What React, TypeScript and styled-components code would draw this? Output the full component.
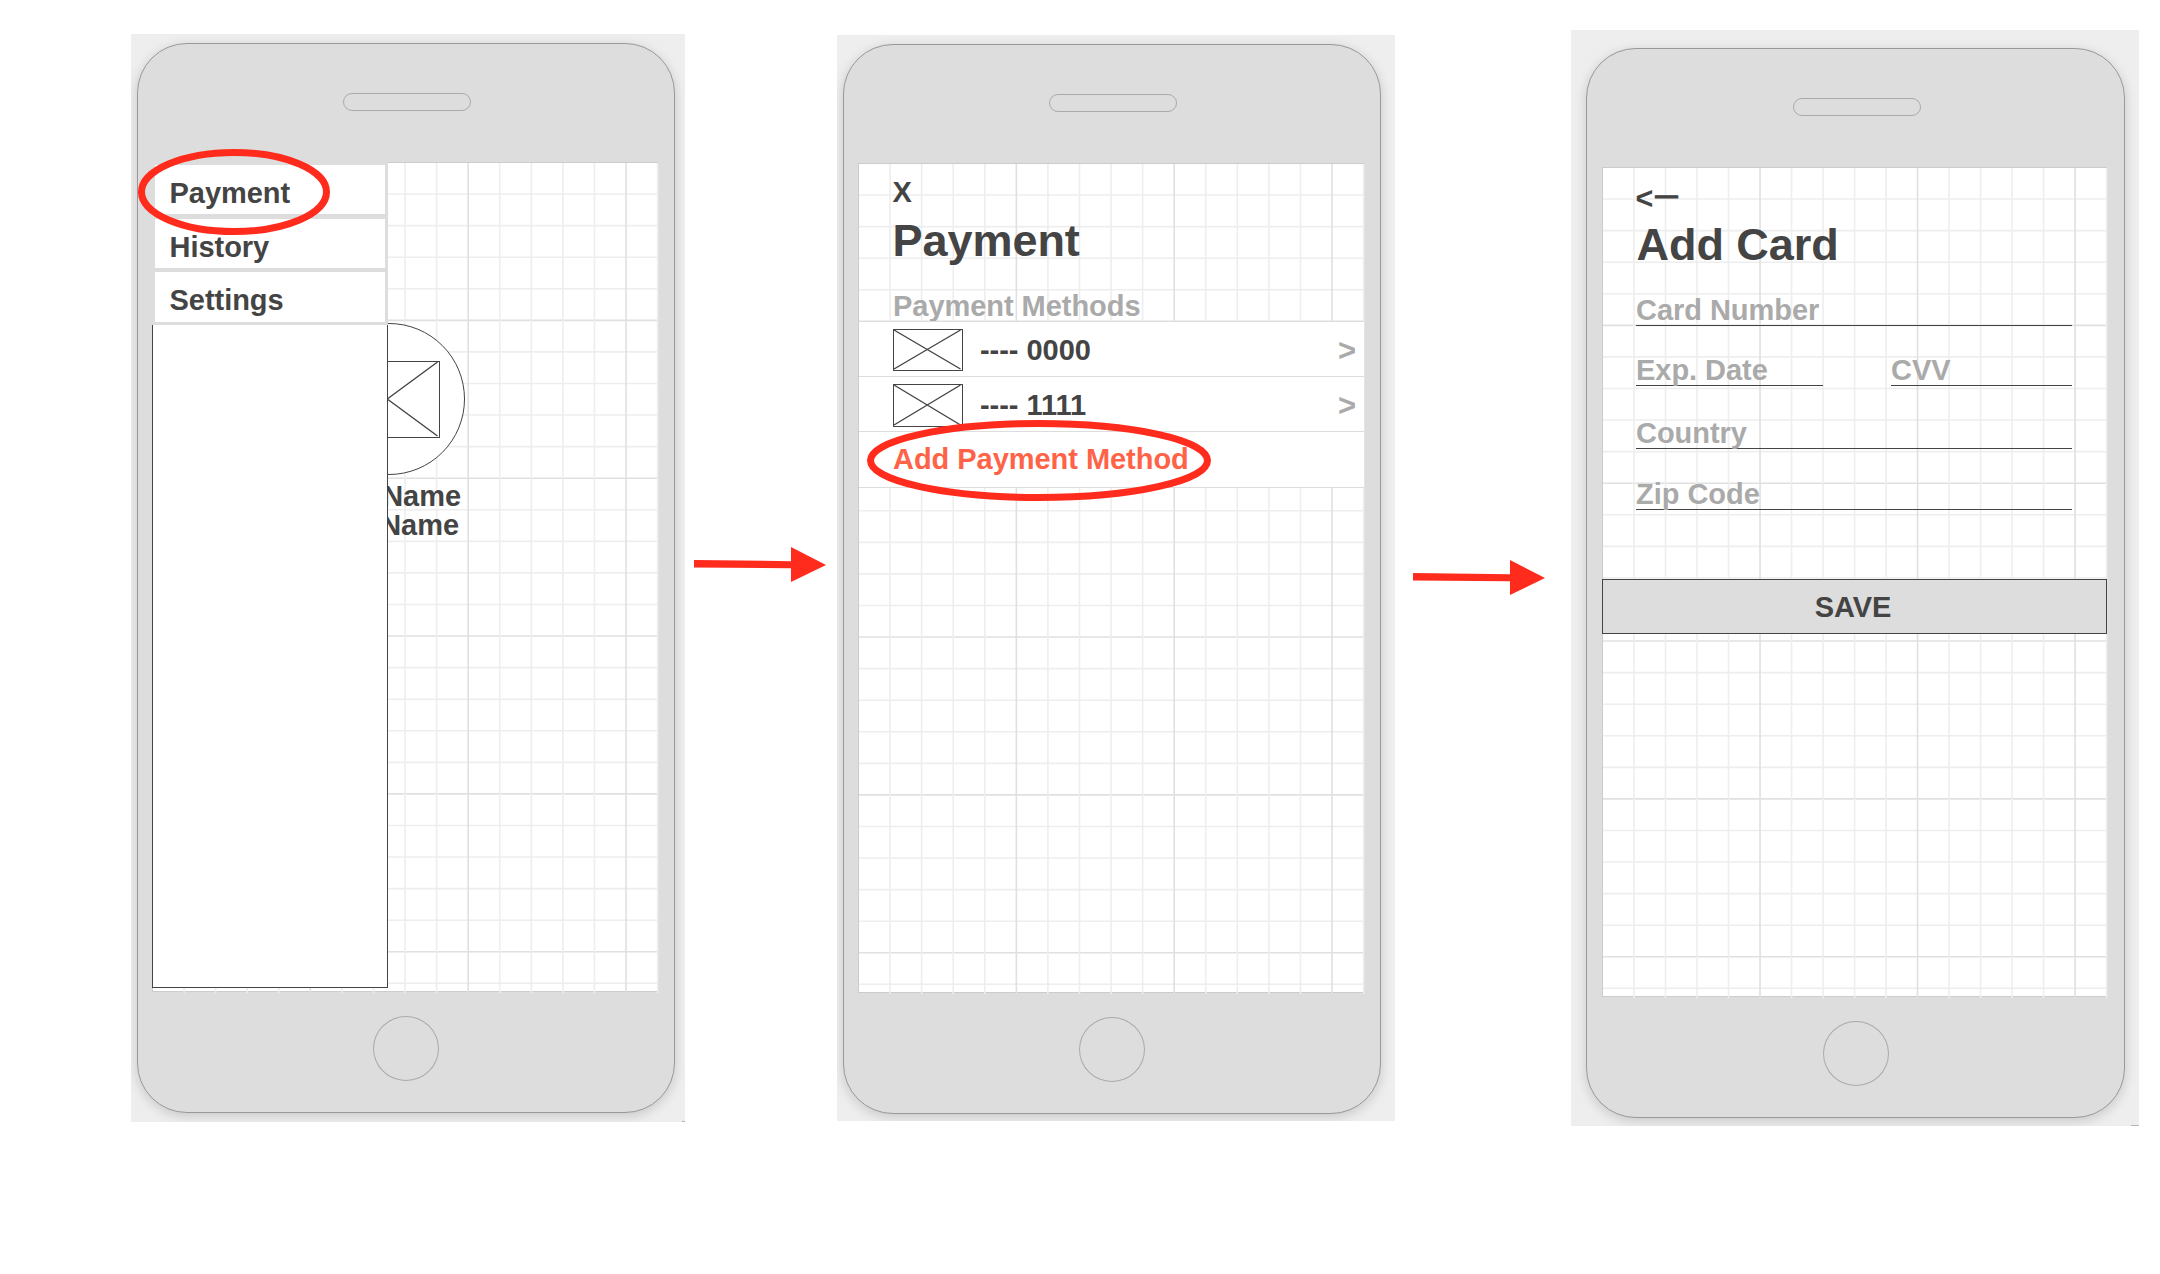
import React from "react";
import styled, { createGlobalStyle } from "styled-components";

const INK = "#444444";
const MUTED = "#aaaaaa";
const PANEL = "#dddddd";
const MARKER = "#ff2b1c";

const GlobalStyle = createGlobalStyle`
  *, *::before, *::after { box-sizing: border-box; }
  body {
    margin: 0;
    background: #ffffff;
    font-family: "Liberation Sans", Arial, Helvetica, sans-serif;
    font-weight: 700;
    font-size: 29px;
    line-height: 32px;
    letter-spacing: -0.04px;
    color: ${INK};
  }
`;

const Page = styled.main`
  display: flex;
  align-items: flex-start;
  width: 2160px;
  height: 1274px;
  padding-left: 131px;
  overflow: hidden;
  background: #ffffff;
`;

const Canvas = styled.section<{ $w: number; $h: number; $top: number; $pad: string; $mark: number }>`
  position: relative;
  flex: none;
  width: ${(p) => p.$w}px;
  height: ${(p) => p.$h}px;
  margin-top: ${(p) => p.$top}px;
  padding: ${(p) => p.$pad};
  background: #eeeeee;
  overflow: hidden;

  &::after {
    content: "";
    position: absolute;
    right: 0;
    bottom: 0;
    width: ${(p) => p.$mark}px;
    height: 1px;
    background: #b5b5b5;
  }
`;

const Body = styled.div<{ $w: number; $inset: number }>`
  display: flex;
  flex-direction: column;
  width: ${(p) => p.$w}px;
  height: 1070px;
  padding: 49px 0 0 ${(p) => p.$inset}px;
  background: ${PANEL};
  border: 1px solid #999999;
  border-radius: 50px;
  box-shadow: 0 3px 12px rgba(0, 0, 0, 0.16);
`;

const Speaker = styled.div`
  width: 128px;
  height: 18px;
  margin-left: 190.5px;
  border: 1px solid #aaaaaa;
  border-radius: 9px;
`;

const Screen = styled.div<{ $w: number }>`
  position: relative;
  width: ${(p) => p.$w}px;
  height: 830px;
  margin-top: 51px;
  background: #ffffff;
`;

const GridSvg = styled.svg`
  position: absolute;
  inset: 0;
  overflow: visible;
`;

const ScreenContent = styled.div`
  position: relative;
  display: flex;
  flex-direction: column;
`;

const HomeButton = styled.div`
  width: 66px;
  height: 65px;
  margin: 24px 0 0 221px;
  border: 1px solid #aaaaaa;
  border-radius: 50%;
`;

const ArrowSvg = styled.svg<{ $top: number; $left: number; $right: number }>`
  flex: none;
  margin: ${(p) => p.$top}px ${(p) => p.$right}px 0 ${(p) => p.$left}px;
`;

const MarkerSvg = styled.svg<{ $x: number; $y: number }>`
  position: absolute;
  left: ${(p) => p.$x}px;
  top: ${(p) => p.$y}px;
  pointer-events: none;
`;

const Drawer = styled.nav`
  position: absolute;
  left: 0;
  top: 0;
  display: flex;
  flex-direction: column;
  width: 236px;
  height: 826px;
`;

const Menu = styled.div`
  display: grid;
  grid-template-rows: 49px 49px 50px;
  row-gap: 4.5px;
  padding: 3px;
  background: ${PANEL};
`;

const MenuItem = styled.div`
  padding: 12px 0 0 14.5px;
  background: #ffffff;
`;

const DrawerBody = styled.div`
  flex: 1;
  background: #ffffff;
  border: 1px solid ${INK};
  border-top: 0;
`;

const Profile = styled.div`
  display: flex;
  flex-direction: column;
  width: 313px;
  padding-top: 161px;
  align-items: flex-end;
`;

const Avatar = styled.div`
  display: flex;
  align-items: center;
  justify-content: center;
  width: 152px;
  height: 152px;
  margin-bottom: 7px;
  padding-right: 2px;
  background: #ffffff;
  border: 1px solid ${INK};
  border-radius: 50%;
`;

const NameLine = styled.div<{ $end: number }>`
  padding-right: ${(p) => p.$end}px;
  line-height: 29px;
`;

const NavGlyph = styled.div`
  height: 32px;
  margin: 13px 0 0 34.5px;
`;

const BackGlyph = styled.div`
  display: flex;
  gap: 2px;
  height: 30px;
  margin: 15px 0 0 33.5px;
  font-size: 30.5px;
`;

const Dash = styled.span`
  font-size: 22.5px;
  line-height: 28px;
  -webkit-text-stroke: 1px ${INK};
`;

const Title = styled.h1`
  margin: 7px 0 0 34.5px;
  font-size: 45px;
  line-height: 51px;
`;

const Subtitle = styled.div`
  height: 31px;
  margin: 24px 0 0 35px;
  color: ${MUTED};
`;

const Row = styled.div`
  display: flex;
  align-items: flex-start;
  height: 55px;
  margin-left: 1px;
  padding: 7px 8px 0 34px;
  background: #ffffff;
  border-top: 1px solid ${PANEL};
`;

const Digits = styled.div`
  flex: 1;
  margin: 5px 0 0 17px;
`;

const Chevron = styled.div`
  margin-top: 6px;
  font-size: 31px;
  color: ${MUTED};
`;

const AddRow = styled.div`
  height: 57px;
  margin-left: 1px;
  padding: 11px 0 0 34px;
  background: #ffffff;
  border-top: 1px solid ${PANEL};
  border-bottom: 1px solid ${PANEL};
  color: #ff6347;
`;

const Form = styled.div`
  display: flex;
  flex-direction: column;
  padding: 24px 35px 0 34px;
`;

const FieldPair = styled.div`
  display: grid;
  grid-template-columns: 187px 181px;
  justify-content: space-between;
  margin: 28px 0 31px;
`;

const Field = styled.div`
  height: 32px;
  border-bottom: 1px solid ${INK};
  color: ${MUTED};
`;

const ZipField = styled(Field)`
  margin-top: 29px;
`;

const SaveButton = styled.div`
  height: 55px;
  margin-top: 69px;
  padding: 11px 3px 0 0;
  background: ${PANEL};
  border: 1px solid ${INK};
  text-align: center;
`;

const CELL = 31.57;

function Grid({ width }: { width: number }) {
  const cols = Array.from({ length: 16 }, (_, i) => i + 1);
  const rows = Array.from({ length: 26 }, (_, i) => i + 1);
  const color = (i: number) => (i % 5 === 0 ? "#e0e0e0" : "#eeeeee");
  const colStep = (width - 0.9) / 16;
  return (
    <GridSvg width={width} height="830" viewBox={`0 0 ${width} 830`}>
      <path d={`M0 .5H${width}M.5 0V830M0 829.5H${width}`} stroke="#cccccc" />
      {rows.map((i) => (
        <path key={`r${i}`} d={`M1 ${0.5 + i * CELL}H${width}`} stroke={color(i)} strokeWidth="1.6" />
      ))}
      {cols.map((i) => (
        <path key={`c${i}`} d={`M${0.5 + i * colStep} 1V831`} stroke={color(i)} strokeWidth="1.6" />
      ))}
    </GridSvg>
  );
}

function ImageBox({ width, height }: { width: number; height: number }) {
  return (
    <svg width={width} height={height} fill="none" stroke={INK}>
      <rect x=".5" y=".5" width={width - 1} height={height - 1} />
      <path
        d={`M1 1L${width - 2.5} ${height - 2}M1 ${height - 2}L${width - 2.5} 1`}
        strokeWidth="1.4"
      />
    </svg>
  );
}

function Arrow(props: { top: number; left: number; right: number }) {
  return (
    <ArrowSvg width="132" height="36" $top={props.top} $left={props.left} $right={props.right}>
      <path d="M0 13L97 14.2V0L132 18L97 35V21.2L0 20.5Z" fill={MARKER} />
    </ArrowSvg>
  );
}

function Marker({ x, y, width, height }: { x: number; y: number; width: number; height: number }) {
  return (
    <MarkerSvg $x={x} $y={y} width={width} height={height}>
      <ellipse
        cx={width / 2}
        cy={height / 2}
        rx={width / 2 - 3.5}
        ry={height / 2 - 3.5}
        fill="none"
        stroke={MARKER}
        strokeWidth="7"
      />
    </MarkerSvg>
  );
}

interface PhoneProps {
  width?: number;
  inset?: number;
  screen?: number;
  children: React.ReactNode;
}

function Phone({ width = 538, inset = 14, screen = 506, children }: PhoneProps) {
  return (
    <Body $w={width} $inset={inset}>
      <Speaker />
      <Screen $w={screen}>
        <Grid width={screen} />
        <ScreenContent>{children}</ScreenContent>
      </Screen>
      <HomeButton />
    </Body>
  );
}

export default function App() {
  return (
    <>
      <GlobalStyle />
      <Page>
        <Canvas $w={554} $h={1088} $top={34} $pad="9px 0 0 6px" $mark={3}>
          <Phone>
            <Profile>
              <Avatar>
                <ImageBox width={104} height={77} />
              </Avatar>
              <NameLine $end={4}>Name</NameLine>
              <NameLine $end={6}>Name</NameLine>
            </Profile>
            <Drawer>
              <Menu>
                <MenuItem>Payment</MenuItem>
                <MenuItem>History</MenuItem>
                <MenuItem>Settings</MenuItem>
              </Menu>
              <DrawerBody />
            </Drawer>
          </Phone>
          <Marker x={7} y={115} width={192} height={86} />
        </Canvas>

        <Arrow top={547} left={9} right={11} />

        <Canvas $w={558} $h={1086} $top={35} $pad="9px 0 0 6px" $mark={0}>
          <Phone>
            <NavGlyph>X</NavGlyph>
            <Title>Payment</Title>
            <Subtitle>Payment Methods</Subtitle>
            <Row>
              <ImageBox width={70} height={42} />
              <Digits>---- 0000</Digits>
              <Chevron>&gt;</Chevron>
            </Row>
            <Row>
              <ImageBox width={70} height={43} />
              <Digits>---- 1111</Digits>
              <Chevron>&gt;</Chevron>
            </Row>
            <AddRow>Add Payment Method</AddRow>
          </Phone>
          <Marker x={30} y={385} width={344} height={81} />
        </Canvas>

        <Arrow top={560} left={18} right={26} />

        <Canvas $w={568} $h={1096} $top={30} $pad="18px 0 0 15px" $mark={8}>
          <Phone width={539} inset={15} screen={505}>
            <BackGlyph>
              <span>&lt;</span>
              <Dash>—</Dash>
            </BackGlyph>
            <Title>Add Card</Title>
            <Form>
              <Field>Card Number</Field>
              <FieldPair>
                <Field>Exp. Date</Field>
                <Field>CVV</Field>
              </FieldPair>
              <Field>Country</Field>
              <ZipField>Zip Code</ZipField>
            </Form>
            <SaveButton>SAVE</SaveButton>
          </Phone>
        </Canvas>
      </Page>
    </>
  );
}
